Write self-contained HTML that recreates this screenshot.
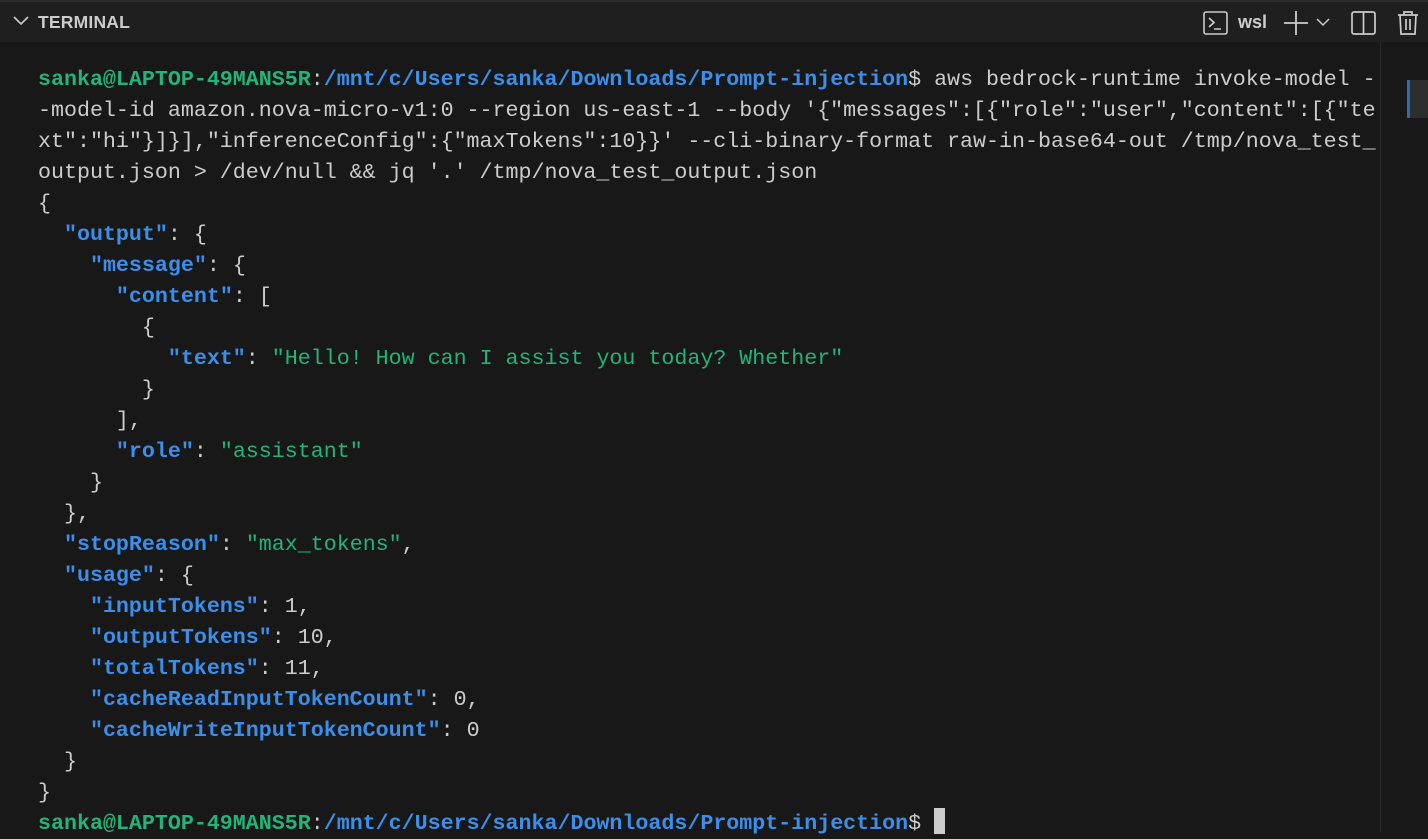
<!DOCTYPE html>
<html><head><meta charset="utf-8"><style>
html,body{margin:0;padding:0;width:1428px;height:832px;overflow:hidden;background:#181818;}
.hdr{position:absolute;left:0;top:0;width:1428px;height:42px;background:#1f1f1f;border-top:2px solid #2b2b2b;box-sizing:border-box;}
.title{position:absolute;left:38px;top:10px;font:bold 17.5px "Liberation Sans",sans-serif;color:#cccccc;letter-spacing:0.2px}
pre{position:absolute;left:38px;top:64px;margin:0;font-family:"Liberation Mono",monospace;font-size:21.65px;line-height:31px;color:#cccccc;white-space:pre;}
.g{color:#23b47a;font-weight:bold}
.b{color:#3b8eea;font-weight:bold}
.s{color:#23b47a}
.k{color:#3b8eea;font-weight:bold}
.cur{display:inline-block;width:11px;height:26px;background:#cccccc;vertical-align:-5px}
.sb{position:absolute;left:1380px;top:42px;width:1px;height:790px;background:#2a2a2a}
.thumb{position:absolute;left:1407px;top:80px;width:21px;height:38px;background:#2e2e2e;border-left:3px solid #2c6bb0;box-sizing:border-box}
</style></head><body>
<div class="hdr">
<svg style="position:absolute;left:12px;top:12px" width="18" height="14" viewBox="0 0 18 14"><path d="M2 3l7 7 7-7" fill="none" stroke="#cccccc" stroke-width="1.6"/></svg>
<div class="title">TERMINAL</div>
<svg style="position:absolute;left:1203px;top:9px" width="26" height="24" viewBox="0 0 26 24"><rect x="1" y="1" width="23" height="22" rx="2" fill="none" stroke="#cccccc" stroke-width="1.6"/><path d="M6 7l5 4.5-5 4.5M11 18h7" fill="none" stroke="#cccccc" stroke-width="1.6"/></svg>
<div style="position:absolute;left:1238px;top:10px;font:bold 18px 'Liberation Sans',sans-serif;color:#cccccc">wsl</div>
<svg style="position:absolute;left:1283px;top:8px" width="26" height="26" viewBox="0 0 26 26"><path d="M13 1v24M1 13h24" stroke="#cccccc" stroke-width="1.8"/></svg>
<svg style="position:absolute;left:1315px;top:14px" width="16" height="12" viewBox="0 0 16 12"><path d="M2 3l6 6 6-6" fill="none" stroke="#cccccc" stroke-width="1.5"/></svg>
<svg style="position:absolute;left:1351px;top:9px" width="26" height="24" viewBox="0 0 26 24"><rect x="1" y="1" width="23" height="22" rx="2" fill="none" stroke="#cccccc" stroke-width="1.7"/><path d="M12.5 1v22" stroke="#cccccc" stroke-width="1.7"/></svg>
<svg style="position:absolute;left:1396px;top:8px" width="24" height="26" viewBox="0 0 24 26"><path d="M2 5h20M8 5V2h8v3M4 5l1 19h14l1-19M10 9v11M14 9v11" fill="none" stroke="#cccccc" stroke-width="1.7"/></svg>
</div>
<div class="sb"></div><div class="thumb"></div>
<pre><span class="g">sanka@LAPTOP-49MANS5R</span>:<span class="b">/mnt/c/Users/sanka/Downloads/Prompt-injection</span>$ aws bedrock-runtime invoke-model -
-model-id amazon.nova-micro-v1:0 --region us-east-1 --body '{"messages":[{"role":"user","content":[{"te
xt":"hi"}]}],"inferenceConfig":{"maxTokens":10}}' --cli-binary-format raw-in-base64-out /tmp/nova_test_
output.json &gt; /dev/null &amp;&amp; jq '.' /tmp/nova_test_output.json
{
  <span class="k">"output"</span>: {
    <span class="k">"message"</span>: {
      <span class="k">"content"</span>: [
        {
          <span class="k">"text"</span>: <span class="s">"Hello! How can I assist you today? Whether"</span>
        }
      ],
      <span class="k">"role"</span>: <span class="s">"assistant"</span>
    }
  },
  <span class="k">"stopReason"</span>: <span class="s">"max_tokens"</span>,
  <span class="k">"usage"</span>: {
    <span class="k">"inputTokens"</span>: 1,
    <span class="k">"outputTokens"</span>: 10,
    <span class="k">"totalTokens"</span>: 11,
    <span class="k">"cacheReadInputTokenCount"</span>: 0,
    <span class="k">"cacheWriteInputTokenCount"</span>: 0
  }
}
<span class="g">sanka@LAPTOP-49MANS5R</span>:<span class="b">/mnt/c/Users/sanka/Downloads/Prompt-injection</span>$ <span class="cur"></span></pre>
</body></html>
